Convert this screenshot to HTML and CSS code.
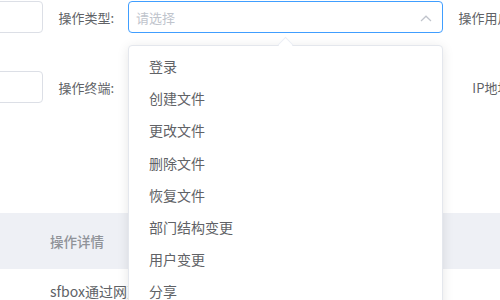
FILE: index.html
```html
<!DOCTYPE html>
<html lang="zh-CN">

<head>
    <meta charset="UTF-8">
    <meta name="viewport" content="width=device-width, initial-scale=1.0">
    <title>操作日志</title>
    <link rel="stylesheet" href="styles.css">
</head>

<body>
    <div class="page">
        <form class="search-form">
            <div class="form-row">
                <div class="input-box lead"></div>
                <label class="form-label">操作类型:</label>
                <div class="select-wrap">
                    <div class="input-box select is-focus">
                        <span class="placeholder">请选择</span>
                        <svg class="arrow" width="12" height="7" viewBox="0 0 12 7">
                            <polyline points="1,6 6,1.2 11,6" fill="none" stroke="#c0c4cc" stroke-width="1.2" />
                        </svg>
                    </div>
                    <div class="dropdown">
                        <span class="popper-arrow"></span>
                        <ul class="dropdown-list">
                            <li>登录</li>
                            <li>创建文件</li>
                            <li>更改文件</li>
                            <li>删除文件</li>
                            <li>恢复文件</li>
                            <li>部门结构变更</li>
                            <li>用户变更</li>
                            <li>分享</li>
                        </ul>
                    </div>
                </div>
                <label class="form-label">操作用户:</label>
                <div class="input-box"></div>
            </div>
            <div class="form-row">
                <div class="input-box lead"></div>
                <label class="form-label">操作终端:</label>
                <div class="input-box select"></div>
                <label class="form-label">IP地址:</label>
                <div class="input-box"></div>
            </div>
        </form>

        <table class="log-table">
            <thead>
                <tr>
                    <th>操作详情</th>
                </tr>
            </thead>
            <tbody>
                <tr>
                    <td>sfbox通过网页登录系统</td>
                </tr>
            </tbody>
        </table>
    </div>
</body>

</html>
```

FILE: styles.css
```css
body,
html {
    margin: 0;
    padding: 0;
    overflow: hidden;
    font-family: "Noto Sans CJK SC", "Noto Sans", sans-serif;
    color: #606266;
    background: #fff;
}

.page {
    width: 500px;
    height: 300px;
    overflow: hidden;
}

.search-form {
    padding-top: 1px;
    margin-left: -157px;
}

.form-row {
    display: flex;
    align-items: center;
    gap: 15px;
    height: 32px;
    margin-bottom: 38px;
    white-space: nowrap;
}

.form-label {
    flex: none;
    width: 70px;
    box-sizing: border-box;
    padding-right: 14px;
    margin-right: -15px;
    text-align: right;
    font-size: 13px;
    color: #606266;
}

.input-box {
    flex: none;
    width: 200px;
    height: 32px;
    box-sizing: border-box;
    border: 1px solid #dcdfe6;
    border-radius: 4px;
    background: #fff;
}

.select-wrap {
    position: relative;
    flex: none;
}

.input-box.select {
    width: 315px;
    display: flex;
    align-items: center;
    justify-content: space-between;
    padding: 0 10px 0 7px;
}

.input-box.is-focus {
    border-color: #409eff;
}

.placeholder {
    font-size: 13px;
    color: #c0c4cc;
}

.arrow {
    margin-top: 3px;
}

.dropdown {
    position: absolute;
    top: 44px;
    left: 0;
    width: 315px;
    height: 300px;
    box-sizing: border-box;
    border: 1px solid #e4e7ed;
    border-radius: 4px;
    background: #fff;
    box-shadow: 0 2px 12px rgba(0, 0, 0, 0.1);
    z-index: 10;
}

.popper-arrow {
    position: absolute;
    top: -7px;
    left: 151px;
    width: 10px;
    height: 10px;
    background: #fff;
    border-left: 1px solid #ebeef5;
    border-top: 1px solid #ebeef5;
    transform: rotate(45deg);
}

.dropdown-list {
    list-style: none;
    margin: 0;
    padding: 4px 0;
}

.dropdown-list li {
    height: 32.2px;
    line-height: 32px;
    padding: 0 20px;
    font-size: 14px;
    color: #606266;
}

.log-table {
    width: 100%;
    margin-top: 110px;
    border-collapse: collapse;
}

.log-table th {
    height: 56px;
    padding: 0 0 0 50px;
    background: #eef0f5;
    text-align: left;
    font-size: 13.5px;
    font-weight: 500;
    color: #909399;
}

.log-table td {
    height: 44px;
    padding: 0 0 0 50px;
    font-size: 14px;
    color: #606266;
    white-space: nowrap;
}
```
